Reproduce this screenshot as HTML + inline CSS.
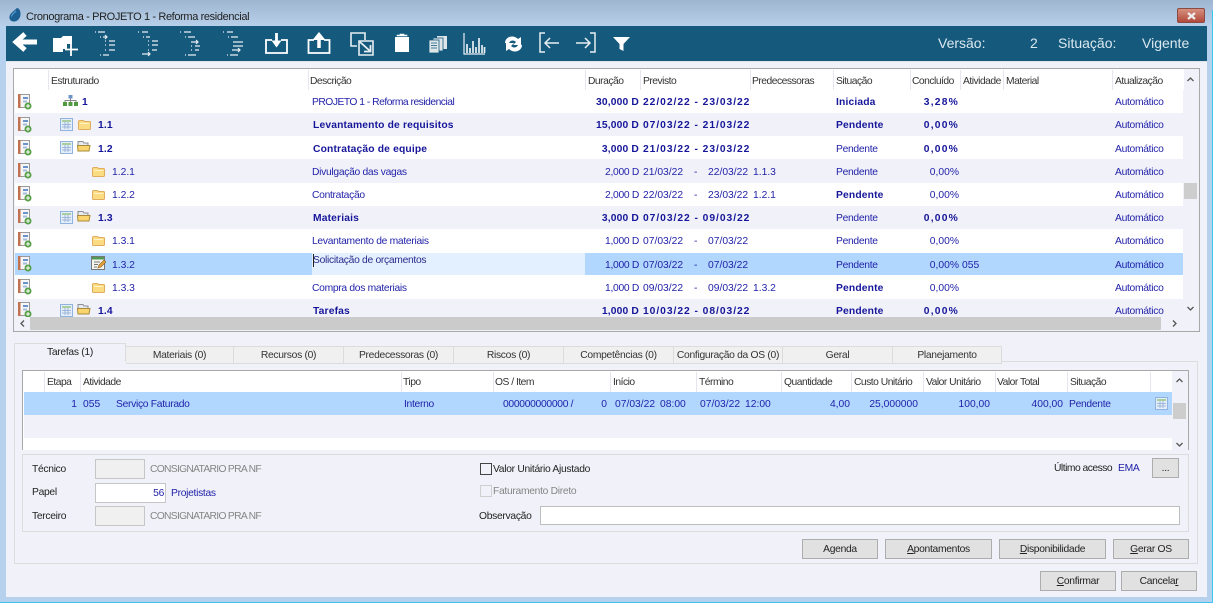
<!DOCTYPE html>
<html lang="pt"><head><meta charset="utf-8"><title>Cronograma</title>
<style>
html,body{margin:0;padding:0}
body{position:relative;width:1213px;height:603px;overflow:hidden;background:#f1f2f9;font:10.3px "Liberation Sans",sans-serif;color:#1f1fa8;letter-spacing:-.3px}
div,span,svg{position:absolute}
span{white-space:nowrap;line-height:14px;height:14px}
b{font-weight:bold;color:#16169a;letter-spacing:.15px}
b.d{letter-spacing:.95px}
b.p{letter-spacing:1.2px}
u{position:static}
.n{letter-spacing:0}
.h{color:#333;letter-spacing:-.5px}.k{color:#222}.g{color:#858585}
.c{letter-spacing:-.7px}
.r{height:23px;left:15px;width:1168px}
.o{background:#f1f2f9}.w{background:#fff}
.s{width:1px;top:70px;height:20px;background:#e6e7ee}
.s2{width:1px;top:372px;height:20px;background:#e6e7ee}
.tab{top:346px;height:16px;background:#f0f0f0;border:1px solid #dcdcdc;border-left:0;text-align:center;line-height:17px;color:#333;white-space:nowrap;box-sizing:content-box}
.btn{background:#e1e1e1;border:1px solid #adadad;box-sizing:border-box;text-align:center;color:#222;line-height:20px;height:20px;white-space:nowrap}
.ib{background:#f0f0f0;border:1px solid #c6c6c6;box-sizing:border-box;height:20px;left:95px;width:50px}
.v{color:#dce8ef;font-size:14px;top:36px;letter-spacing:0}
</style></head><body>
<svg width="0" height="0" style="left:0;top:0">
<symbol id="ri" viewBox="0 0 14 16"><rect x=".5" y=".5" width="11" height="13" fill="#f6f6f6" stroke="#9a9a9a"/><rect x="0" y="0" width="2.500" height="14" fill="#c27150"/><rect x="5" y="3" width="5" height="2" fill="#6a92cc"/><rect x="5" y="6.500" width="4" height="2" fill="#a6bcdc"/><circle cx="10" cy="12" r="3.500" fill="#57a048"/><path d="M8 12h4M10 10v4" stroke="#fff"/></symbol>
<symbol id="tb" viewBox="0 0 13 13"><rect x=".5" y=".5" width="12" height="12" fill="#e3eefa" stroke="#8fb3dc"/><rect x="2" y="2" width="9" height="2" fill="#a9cf9e"/><path d="M2 6.500h9M2 9h9M5 4v7M8 4v7" stroke="#8fa9d0" stroke-width=".8"/></symbol>
<symbol id="fc" viewBox="0 0 13 11"><path d="M.5 2.500v7a1 1 0 0 0 1 1h10a1 1 0 0 0 1-1v-6a1 1 0 0 0-1-1h-5l-1-1h-4a1 1 0 0 0-1 1z" fill="#fcdc82" stroke="#e0ad5e"/><rect x="2" y="4" width="9" height="1" fill="#fff3c4"/></symbol>
<symbol id="fo" viewBox="0 0 14 12"><path d="M1 9V1.500h5l1 1.500h4v2" fill="#e8eaee" stroke="#8b8f98"/><path d="M.5 5.500h12.500l-1 5.500h-11z" fill="#fad46c" stroke="#a98a3c"/></symbol>
<symbol id="ed" viewBox="0 0 15 15"><rect x=".5" y=".5" width="13" height="13" fill="#f5f5f0" stroke="#777"/><rect x="1" y="1" width="12" height="2.500" fill="#4f9a52"/><path d="M3 6h6M3 8.500h4M3 11h3" stroke="#777"/><path d="M7 12l1-3 5-5 2 2-5 5z" fill="#e3a33c" stroke="#8a5a20" stroke-width=".6"/></symbol>
<symbol id="og" viewBox="0 0 15 11"><rect x="5.500" y="0" width="4" height="3.500" fill="#6d93c9"/><path d="M7.500 3.500v2M2 7V5.500h11V7M7.500 5.500V7" stroke="#888" fill="none"/><rect x="0" y="7" width="4" height="4" fill="#4f9a3f"/><rect x="5.500" y="7" width="4" height="4" fill="#4f9a3f"/><rect x="11" y="7" width="4" height="4" fill="#4f9a3f"/></symbol>
</svg>

<!-- window frame -->
<div style="left:0;top:0;width:1213px;height:26px;background:linear-gradient(#9db5d0,#b7cfe9)"></div>
<div style="left:0;top:26px;width:6px;height:576px;background:#b5d1ed"></div>
<div style="left:1207px;top:26px;width:5px;height:576px;background:#b5d1ed"></div>
<div style="left:0;top:597px;width:1213px;height:5px;background:#b5d1ed"></div>
<div style="left:0;top:602px;width:1213px;height:1px;background:#3cc6ef"></div>
<div style="left:1212px;top:10px;width:1px;height:593px;background:#3cc6ef"></div>
<svg style="left:9px;top:8px" width="12" height="14" viewBox="0 0 12 14"><path d="M8 0C9 0 11 1 11.500 5c.5 5-3 8.500-6.500 8.500S0 11 .5 8.500C1 5 5 3 8 0z" fill="#1c5f93"/><path d="M7 3C5 5 3 6 2.500 8.500" stroke="#5fa4d6" fill="none"/></svg>
<span style="left:26px;top:10px;font-size:11px;color:#222;letter-spacing:-.37px">Cronograma - PROJETO 1 - Reforma residencial</span>
<div style="left:1177px;top:8px;width:28px;height:15px;background:linear-gradient(#d6907f,#b24a3c);border:1px solid #8c4a44;box-sizing:border-box;border-radius:2px"></div>
<svg style="left:1186px;top:12px" width="11" height="8" viewBox="0 0 11 8"><path d="M2 1l7 6M9 1L2 7" stroke="#eee" stroke-width="2.200"/></svg>

<!-- toolbar -->
<div style="left:6px;top:26px;width:1201px;height:35px;background:#155a7d"></div>
<svg style="left:0;top:0" width="1213" height="62" viewBox="0 0 1213 62" fill="none" stroke="#e8eef2">
<path d="M37 42H18M25 34l-9 8 9 8" stroke="#fff" stroke-width="5"/>
<path d="M53 38h8l2-2h9v8h-5v5h-4v3H53z" fill="#fff" stroke="none"/><path d="M71 43v13M65 49.500h13" stroke="#fff" stroke-width="1.800"/>
<g stroke-width="1.200">
<path d="M95 32h1M98 32h7M100 37h1M103 37h4M105 35l2 2-2 2M105 41h1M105 45h1M105 50h1M109 41h6M109 45h6M109 50h6M100 55h1M103 55h6"/>
<path d="M138 32h1M142 32h6M143 37h1M146 37h4M148 41h1M148 45h1M148 50h1M152 41h6M152 45h6M152 50h5M142 54h8M148 52l2 2-2 2"/>
<path d="M180 32h1M184 32h7M185 37h1M188 37h7M191 42h7M196 40l2 2-2 2M191 46h1M195 46h5M191 50h1M195 50h4M185 55h1M188 55h8"/>
<path d="M223 32h1M227 32h6M228 37h1M231 37h7M233 42h10M233 46h10M232 50h8M238 48l2 2-2 2M227 55h1M230 55h8"/>
</g>
<path d="M272 40h-6v13h21V40h-6" stroke="#fff" stroke-width="1.800"/><path d="M276.500 33v13" stroke="#fff" stroke-width="2.800"/><path d="M271.500 40.500h10l-5 7z" fill="#fff" stroke="none"/>
<path d="M314 40h-5.500v13h21V40H324" stroke="#fff" stroke-width="1.800"/><path d="M319 39v9" stroke="#fff" stroke-width="3.500"/><path d="M312.500 40l6.500-8 6.500 8z" fill="#fff" stroke="none"/>
<path d="M357 46h-6V33h14v7" stroke-width="1.600"/><path d="M359 41h14v14h-14z" stroke-width="1.600"/><path d="M360 42l10 9M370.500 45v6.500H364" stroke-width="1.800"/>
<path d="M395 37h14v15h-14z" fill="#fff" stroke="none"/><path d="M397 36h10v-1h-3v-1h-4v1h-3z" fill="#fff" stroke="#fff" stroke-width=".6"/>
<g stroke="none" fill="#dfe6ea"><rect x="437" y="36" width="10" height="13"/><rect x="433" y="38" width="10" height="13" stroke="#155a7d" stroke-width=".8"/><rect x="429" y="40" width="10" height="13" stroke="#155a7d" stroke-width=".8"/></g><path d="M431 43h6M431 45.500h6M431 48h6" stroke="#155a7d" stroke-width=".8"/>
<path d="M464 33v21h21" stroke-width="1.200"/><path d="M467 53v-9M470 53v-5M473 53V41M476 53v-6M479 53V38M482 53v-8M484.500 53v-6" stroke-width="1.700"/>
<path d="M505 43c0-6 8-9 13-4l3-2v8h-8l3-3c-3-3-7-1-7 2z" fill="#fff" stroke="none"/><path d="M522 45c0 6-8 9-13 4l-3 2v-8h8l-3 3c3 3 7 1 7-2z" fill="#fff" stroke="none"/>
<path d="M545 33h-5v19h5" stroke-width="1.500"/><path d="M559 43h-14M550 38l-5 5 5 5" stroke-width="1.500"/>
<path d="M590 33h5v19h-5" stroke-width="1.500"/><path d="M576 43h14M585 38l5 5-5 5" stroke-width="1.500"/>
<path d="M613 37h17l-6.500 7v7l-4-2v-5z" fill="#fff" stroke="none"/>
</svg>
<span class="v" style="left:938px">Versão:</span>
<span class="v" style="left:1030px">2</span>
<span class="v" style="left:1058px">Situação:</span>
<span class="v" style="left:1142px">Vigente</span>

<!-- upper grid -->
<div style="left:6px;top:61px;width:1201px;height:1px;background:#dfe3ea"></div>
<div style="left:13px;top:68px;width:1187px;height:264px;border:1px solid #a8a8a8;box-sizing:border-box;background:#f1f2f9"></div>
<div style="left:14px;top:69px;width:1170px;height:21px;background:#fff"></div>
<div class="s" style="left:48px"></div><div class="s" style="left:308px"></div><div class="s" style="left:585px"></div><div class="s" style="left:640px"></div><div class="s" style="left:750px"></div><div class="s" style="left:833px"></div><div class="s" style="left:910px"></div><div class="s" style="left:960px"></div><div class="s" style="left:1003px"></div><div class="s" style="left:1112px"></div>
<span class="h" style="left:51px;top:75px">Estruturado</span><span class="h" style="left:310px;top:75px">Descrição</span><span class="h" style="left:588px;top:75px">Duração</span><span class="h" style="left:643px;top:75px">Previsto</span><span class="h" style="left:752px;top:75px">Predecessoras</span><span class="h" style="left:836px;top:75px">Situação</span><span class="h" style="left:912px;top:75px">Concluído</span><span class="h" style="left:963px;top:75px">Atividade</span><span class="h" style="left:1006px;top:75px">Material</span><span class="h" style="left:1115px;top:75px">Atualização</span>

<div class="r w" style="top:90px"></div>
<div class="r o" style="top:113px"></div>
<div class="r w" style="top:136px"></div>
<div class="r o" style="top:160px"></div>
<div class="r w" style="top:183px"></div>
<div class="r o" style="top:206px"></div>
<div class="r w" style="top:229px;height:24px"></div>
<div class="r" style="top:253px;height:22px;background:#b1d7fe"></div>
<div class="r w" style="top:275px;height:24px"></div>
<div class="r o" style="top:299px;height:18px"></div>
<div style="left:312px;top:253px;width:273px;height:22px;background:#e3f0ff"></div>

<svg style="left:18px;top:94px" width="14" height="16"><use href="#ri"/></svg>
<svg style="left:18px;top:117px" width="14" height="16"><use href="#ri"/></svg>
<svg style="left:18px;top:140px" width="14" height="16"><use href="#ri"/></svg>
<svg style="left:18px;top:163px" width="14" height="16"><use href="#ri"/></svg>
<svg style="left:18px;top:186px" width="14" height="16"><use href="#ri"/></svg>
<svg style="left:18px;top:209px" width="14" height="16"><use href="#ri"/></svg>
<svg style="left:18px;top:232px" width="14" height="16"><use href="#ri"/></svg>
<svg style="left:18px;top:256px" width="14" height="16"><use href="#ri"/></svg>
<svg style="left:18px;top:279px" width="14" height="16"><use href="#ri"/></svg>
<div style="left:18px;top:302px;width:14px;height:15px;overflow:hidden"><svg style="left:0;top:0" width="14" height="16"><use href="#ri"/></svg></div>

<svg style="left:63px;top:95px" width="15" height="11"><use href="#og"/></svg>
<svg style="left:60px;top:118px" width="13" height="13"><use href="#tb"/></svg><svg style="left:78px;top:119px" width="13" height="11"><use href="#fc"/></svg>
<svg style="left:60px;top:141px" width="13" height="13"><use href="#tb"/></svg><svg style="left:77px;top:140px" width="14" height="12"><use href="#fo"/></svg>
<svg style="left:92px;top:166px" width="13" height="11"><use href="#fc"/></svg>
<svg style="left:92px;top:189px" width="13" height="11"><use href="#fc"/></svg>
<svg style="left:60px;top:211px" width="13" height="13"><use href="#tb"/></svg><svg style="left:77px;top:210px" width="14" height="12"><use href="#fo"/></svg>
<svg style="left:92px;top:235px" width="13" height="11"><use href="#fc"/></svg>
<svg style="left:91px;top:256px" width="15" height="15"><use href="#ed"/></svg>
<svg style="left:92px;top:282px" width="13" height="11"><use href="#fc"/></svg>
<svg style="left:60px;top:304px" width="13" height="13"><use href="#tb"/></svg><svg style="left:77px;top:303px" width="14" height="12"><use href="#fo"/></svg>

<!-- row 1 -->
<span style="left:82px;top:96px"><b>1</b></span><span style="left:312px;top:96px;letter-spacing:-.5px">PROJETO 1 - Reforma residencial</span><span style="right:574px;top:96px"><b>30,000 D</b></span><span style="left:643px;top:96px"><b class="d">22/02/22 - 23/03/22</b></span><span style="left:836px;top:96px"><b>Iniciada</b></span><span style="right:254px;top:96px"><b class="p">3,28%</b></span><span style="left:1115px;top:96px">Automático</span>
<!-- 1.1 -->
<span style="left:98px;top:119px"><b>1.1</b></span><span style="left:313px;top:119px"><b>Levantamento de requisitos</b></span><span style="right:574px;top:119px"><b>15,000 D</b></span><span style="left:643px;top:119px"><b class="d">07/03/22 - 21/03/22</b></span><span style="left:836px;top:119px"><b>Pendente</b></span><span style="right:254px;top:119px"><b class="p">0,00%</b></span><span style="left:1115px;top:119px">Automático</span>
<!-- 1.2 -->
<span style="left:98px;top:143px"><b>1.2</b></span><span style="left:313px;top:143px"><b>Contratação de equipe</b></span><span style="right:574px;top:143px"><b>3,000 D</b></span><span style="left:643px;top:143px"><b class="d">21/03/22 - 23/03/22</b></span><span style="left:836px;top:143px">Pendente</span><span style="right:254px;top:143px"><b class="p">0,00%</b></span><span style="left:1115px;top:143px">Automático</span>
<!-- 1.2.1 -->
<span class="n" style="left:112px;top:166px">1.2.1</span><span style="left:312px;top:166px">Divulgação das vagas</span><span style="right:574px;top:166px">2,000 D</span><span class="n" style="left:643px;top:166px">21/03/22</span><span style="left:694px;top:166px">-</span><span class="n" style="left:708px;top:166px">22/03/22</span><span class="n" style="left:753px;top:166px">1.1.3</span><span style="left:836px;top:166px">Pendente</span><span class="n" style="right:254px;top:166px">0,00%</span><span style="left:1115px;top:166px">Automático</span>
<!-- 1.2.2 -->
<span class="n" style="left:112px;top:189px">1.2.2</span><span style="left:312px;top:189px">Contratação</span><span style="right:574px;top:189px">2,000 D</span><span class="n" style="left:643px;top:189px">22/03/22</span><span style="left:694px;top:189px">-</span><span class="n" style="left:708px;top:189px">23/03/22</span><span class="n" style="left:753px;top:189px">1.2.1</span><span style="left:836px;top:189px"><b>Pendente</b></span><span class="n" style="right:254px;top:189px">0,00%</span><span style="left:1115px;top:189px">Automático</span>
<!-- 1.3 -->
<span style="left:98px;top:212px"><b>1.3</b></span><span style="left:313px;top:212px"><b>Materiais</b></span><span style="right:574px;top:212px"><b>3,000 D</b></span><span style="left:643px;top:212px"><b class="d">07/03/22 - 09/03/22</b></span><span style="left:836px;top:212px">Pendente</span><span style="right:254px;top:212px"><b class="p">0,00%</b></span><span style="left:1115px;top:212px">Automático</span>
<!-- 1.3.1 -->
<span class="n" style="left:112px;top:235px">1.3.1</span><span style="left:312px;top:235px">Levantamento de materiais</span><span style="right:574px;top:235px">1,000 D</span><span class="n" style="left:643px;top:235px">07/03/22</span><span style="left:694px;top:235px">-</span><span class="n" style="left:708px;top:235px">07/03/22</span><span style="left:836px;top:235px">Pendente</span><span class="n" style="right:254px;top:235px">0,00%</span><span style="left:1115px;top:235px">Automático</span>
<!-- 1.3.2 -->
<span class="n" style="left:112px;top:259px">1.3.2</span><span style="left:313px;top:254px;color:#2a2a8c">Solicitação de orçamentos</span><span style="right:574px;top:259px">1,000 D</span><span class="n" style="left:643px;top:259px">07/03/22</span><span style="left:694px;top:259px">-</span><span class="n" style="left:708px;top:259px">07/03/22</span><span style="left:836px;top:259px">Pendente</span><span class="n" style="right:254px;top:259px">0,00%</span><span class="n" style="left:962px;top:259px">055</span><span style="left:1115px;top:259px">Automático</span>
<div style="left:313px;top:254px;width:1px;height:13px;background:#222"></div>
<!-- 1.3.3 -->
<span class="n" style="left:112px;top:282px">1.3.3</span><span style="left:312px;top:282px">Compra dos materiais</span><span style="right:574px;top:282px">1,000 D</span><span class="n" style="left:643px;top:282px">09/03/22</span><span style="left:694px;top:282px">-</span><span class="n" style="left:708px;top:282px">09/03/22</span><span class="n" style="left:753px;top:282px">1.3.2</span><span style="left:836px;top:282px"><b>Pendente</b></span><span class="n" style="right:254px;top:282px">0,00%</span><span style="left:1115px;top:282px">Automático</span>
<!-- 1.4 -->
<div style="left:14px;top:305px;width:1170px;height:12px;overflow:hidden">
<span style="left:84px;top:0"><b>1.4</b></span><span style="left:299px;top:0"><b>Tarefas</b></span><span style="right:545px;top:0"><b>1,000 D</b></span><span style="left:629px;top:0"><b class="d">10/03/22 - 08/03/22</b></span><span style="left:822px;top:0"><b>Pendente</b></span><span style="right:225px;top:0"><b class="p">0,00%</b></span><span style="left:1101px;top:0">Automático</span>
</div>

<!-- upper scrollbars -->
<div style="left:1184px;top:183px;width:13px;height:16px;background:#cdcdcd"></div>
<div style="left:30px;top:317px;width:1131px;height:13px;background:#cbcbcb"></div>
<div style="left:14px;top:330px;width:1185px;height:1px;background:#f1f2f9"></div>

<!-- tabs -->
<div style="left:14px;top:361px;width:1184px;height:203px;background:#f1f2f9;border:1px solid #dcdcdc;box-sizing:border-box"></div>
<div style="left:14px;top:343px;width:112px;height:19px;background:#f1f2f9;border:1px solid #dcdcdc;border-bottom:0;box-sizing:border-box;text-align:center;line-height:18px;color:#222;white-space:nowrap">Tarefas (1)</div>
<div class="tab" style="left:126px;width:107px">Materiais (0)</div>
<div class="tab" style="left:234px;width:109px">Recursos (0)</div>
<div class="tab" style="left:344px;width:109px">Predecessoras (0)</div>
<div class="tab" style="left:454px;width:109px">Riscos (0)</div>
<div class="tab" style="left:564px;width:109px">Competências (0)</div>
<div class="tab" style="left:674px;width:108px">Configuração da OS (0)</div>
<div class="tab" style="left:783px;width:109px">Geral</div>
<div class="tab" style="left:893px;width:108px">Planejamento</div>

<!-- lower grid -->
<div style="left:22px;top:370px;width:1167px;height:80px;border:1px solid #a8a8a8;border-bottom:0;box-sizing:border-box;background:#fff"></div>
<div style="left:24px;top:392px;width:1148px;height:23px;background:#b1d7fe"></div>
<div style="left:24px;top:415px;width:1148px;height:23px;background:#f1f2f9"></div>
<div style="left:1172px;top:371px;width:16px;height:79px;background:#f1f2f9"></div>
<div style="left:1173px;top:403px;width:13px;height:16px;background:#cdcdcd"></div>
<div class="s2" style="left:44px"></div><div class="s2" style="left:80px"></div><div class="s2" style="left:401px"></div><div class="s2" style="left:493px"></div><div class="s2" style="left:610px"></div><div class="s2" style="left:696px"></div><div class="s2" style="left:781px"></div><div class="s2" style="left:851px"></div><div class="s2" style="left:923px"></div><div class="s2" style="left:995px"></div><div class="s2" style="left:1067px"></div><div class="s2" style="left:1150px"></div>
<span class="h" style="left:47px;top:376px">Etapa</span><span class="h" style="left:83px;top:376px">Atividade</span><span class="h" style="left:403px;top:376px">Tipo</span><span class="h" style="left:495px;top:376px">OS / Item</span><span class="h" style="left:613px;top:376px">Início</span><span class="h" style="left:699px;top:376px">Término</span><span class="h" style="left:784px;top:376px">Quantidade</span><span class="h" style="left:854px;top:376px">Custo Unitário</span><span class="h" style="left:926px;top:376px">Valor Unitário</span><span class="h" style="left:997px;top:376px">Valor Total</span><span class="h" style="left:1070px;top:376px">Situação</span>
<span class="n" style="right:1136px;top:398px">1</span><span class="n" style="left:83px;top:398px">055</span><span style="left:116px;top:398px">Serviço Faturado</span><span style="left:404px;top:398px">Interno</span><span style="left:503px;top:398px">000000000000 /</span><span class="n" style="right:606px;top:398px">0</span><span class="n" style="left:615px;top:398px">07/03/22</span><span class="n" style="left:660px;top:398px">08:00</span><span class="n" style="left:700px;top:398px">07/03/22</span><span class="n" style="left:745px;top:398px">12:00</span><span class="n" style="right:363px;top:398px">4,00</span><span class="n" style="right:295px;top:398px">25,000000</span><span class="n" style="right:223px;top:398px">100,00</span><span class="n" style="right:150px;top:398px">400,00</span><span style="left:1069px;top:398px">Pendente</span>
<svg style="left:1155px;top:397px" width="13" height="13"><use href="#tb"/></svg>

<!-- form group -->
<div style="left:22px;top:454px;width:1167px;height:78px;border:1px solid #dcdcdc;box-sizing:border-box"></div>
<span class="k" style="left:32px;top:463px">Técnico</span>
<div class="ib" style="top:459px"></div>
<span class="g c" style="left:150px;top:463px">CONSIGNATARIO PRA NF</span>
<span class="k" style="left:32px;top:486px">Papel</span>
<div class="ib" style="top:483px;width:71px;background:#fff"></div>
<span style="right:1049px;top:487px">56</span>
<span style="left:171px;top:487px">Projetistas</span>
<span class="k" style="left:32px;top:510px">Terceiro</span>
<div class="ib" style="top:506px"></div>
<span class="g c" style="left:150px;top:510px">CONSIGNATARIO PRA NF</span>

<div style="left:480px;top:463px;width:12px;height:12px;background:#f1f2f9;border:1px solid #444;box-sizing:border-box"></div>
<span class="k" style="left:493px;top:463px">Valor Unitário Ajustado</span>
<div style="left:480px;top:485px;width:12px;height:12px;background:#f1f2f9;border:1px solid #cfcfcf;box-sizing:border-box"></div>
<span class="g" style="left:493px;top:485px">Faturamento Direto</span>
<span class="k" style="left:479px;top:510px">Observação</span>
<div style="left:540px;top:506px;width:640px;height:19px;background:#fff;border:1px solid #bdbdbd;box-sizing:border-box"></div>
<span class="k" style="left:1054px;top:462px;letter-spacing:-.5px">Último acesso</span>
<span style="left:1118px;top:462px">EMA</span>
<div class="btn" style="left:1152px;top:458px;width:27px">...</div>

<div class="btn" style="left:802px;top:539px;width:76px">A<u>g</u>enda</div>
<div class="btn" style="left:885px;top:539px;width:107px"><u>A</u>pontamentos</div>
<div class="btn" style="left:999px;top:539px;width:107px"><u>D</u>isponibilidade</div>
<div class="btn" style="left:1113px;top:539px;width:76px"><u>G</u>erar OS</div>
<div class="btn" style="left:1040px;top:571px;width:76px"><u>C</u>onfirmar</div>
<div class="btn" style="left:1121px;top:571px;width:76px">Cancela<u>r</u></div>

<svg style="left:0;top:0" width="1213" height="603" viewBox="0 0 1213 603" fill="none" stroke="#555" stroke-width="1.300">
<path d="M1187.500 81l3-3 3 3M1187.500 307l3 3 3-3M1173 320.500l3 3-3 3M24 320.500l-3 3 3 3"/>
<path d="M1176.500 382l3-3 3 3M1176.500 443l3 3 3-3"/>
</svg>
</body></html>
